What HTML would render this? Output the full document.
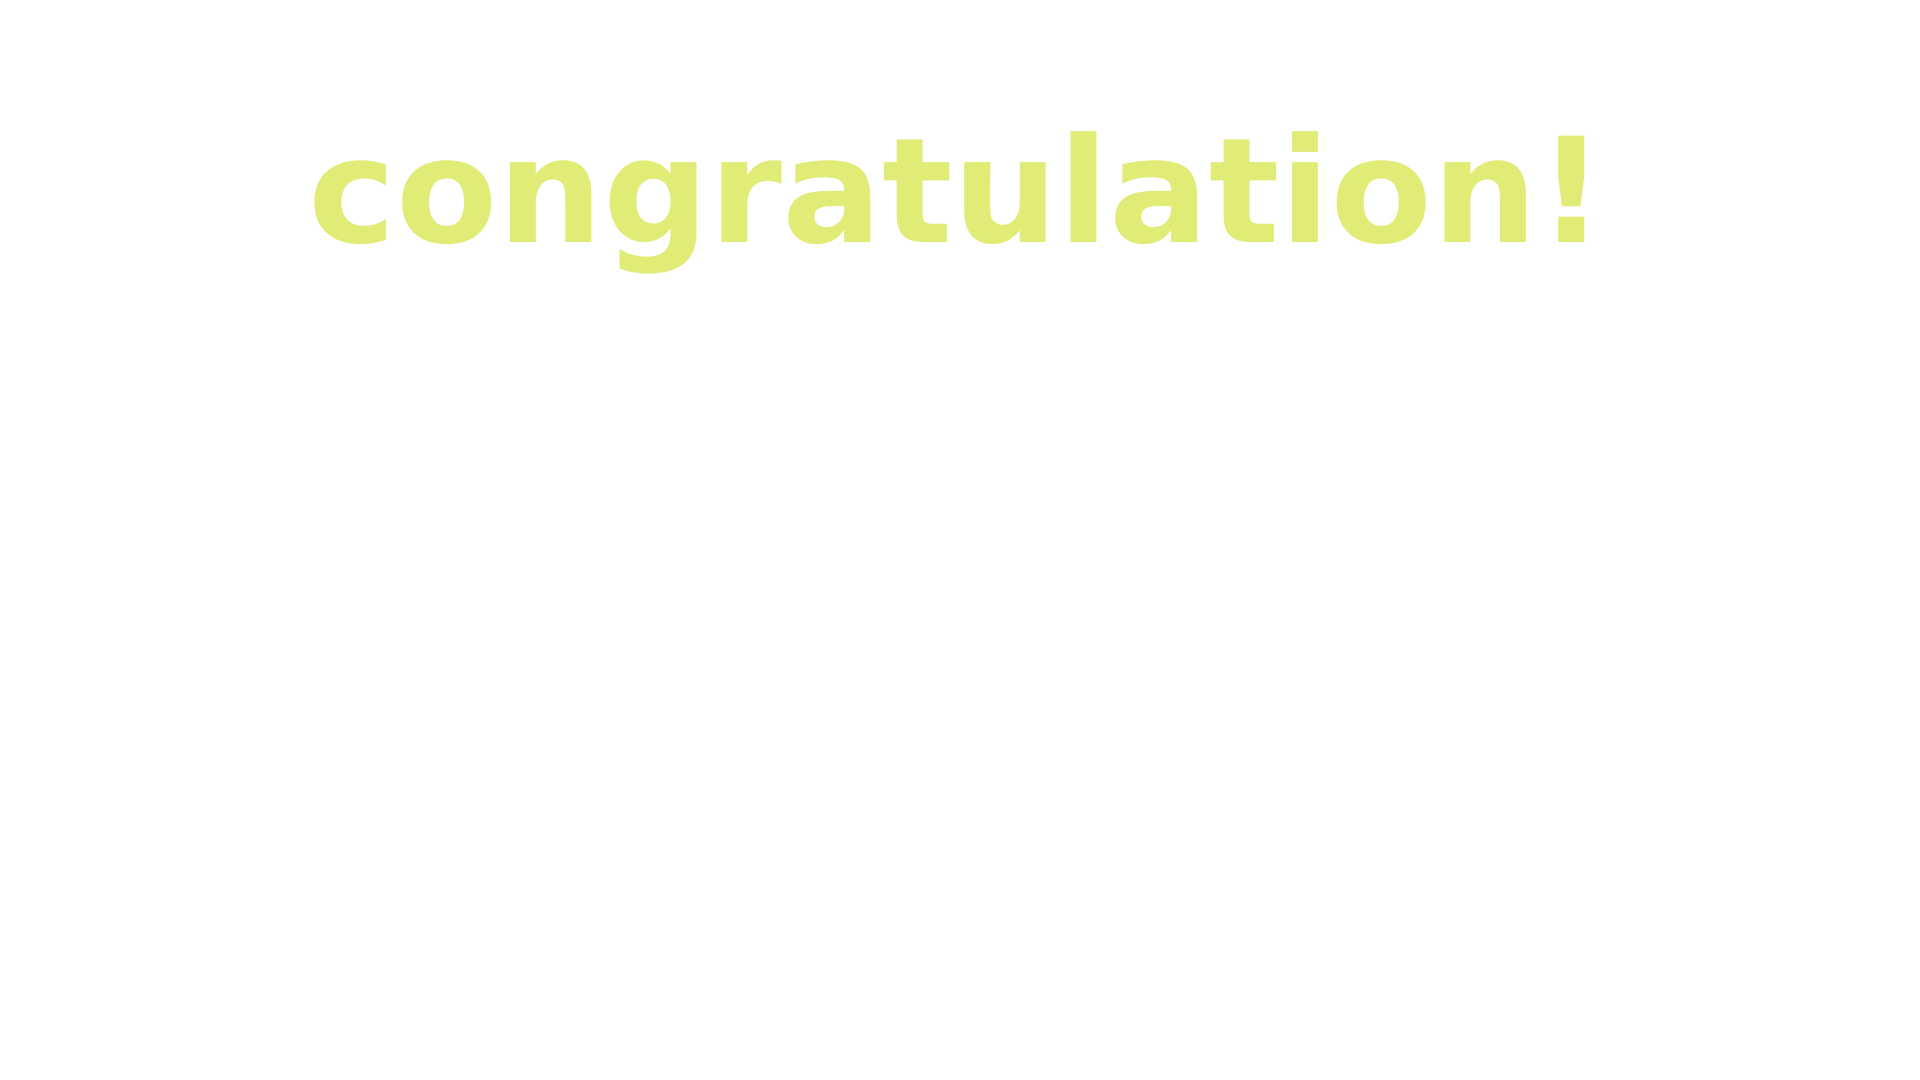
<!DOCTYPE html>
<html>
<head>
<meta charset="utf-8">
<style>
html,body{margin:0;padding:0;background:#ffffff;width:1920px;height:1080px;overflow:hidden;}
svg{position:absolute;left:0;top:0;}
</style>
</head>
<body>
<svg width="1920" height="1080" viewBox="0 0 1920 1080">
<text x="308" y="242" font-family="'DejaVu Sans', 'Liberation Sans', sans-serif" font-weight="bold" font-size="146" fill="#e0ec76" textLength="1297" lengthAdjust="spacingAndGlyphs">congratulation!</text>
</svg>
</body>
</html>
